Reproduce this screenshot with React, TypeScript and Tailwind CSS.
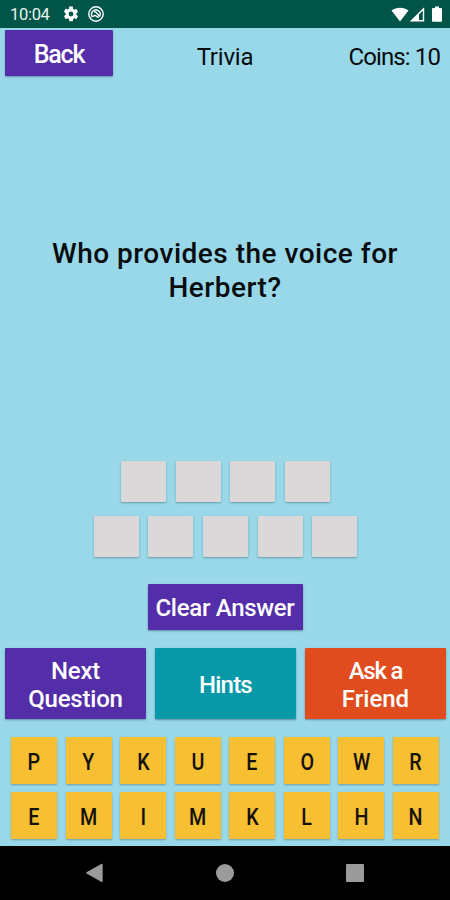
import React from 'react';

interface TileProps {
  letter: string;
}

const LetterTile: React.FC<TileProps> = ({ letter }) => {
  return (
    <button className="flex h-[47px] w-[46px] items-center justify-center rounded-[1px] bg-[#f7bf32] pt-[2px] text-[24px] leading-none font-medium text-[#15110a] shadow-[0_1px_2px_rgba(60,70,60,0.4)]">
      <span className="inline-block scale-x-[0.82]">{letter}</span>
    </button>
  );
};

const AnswerSlot: React.FC = () => {
  return <div className="h-[41px] w-[45px] rounded-[1px] bg-[#dad8d9] shadow-[0_1px_2px_rgba(40,80,90,0.45)]" />;
};

const StatusBar: React.FC = () => {
  return (
    <header className="flex h-7 shrink-0 items-center bg-[#005548] pr-[8px] pl-[10px] text-white">
      <span className="w-[41px] pt-[2px] text-[16.5px] leading-7 tracking-[-0.3px] text-[#e8f4ef]">10:04</span>
      <svg className="ml-[11px] h-[18px] w-[18px]" viewBox="0 0 24 24" fill="currentColor">
        <path d="M19.14 12.94c.04-.3.06-.61.06-.94s-.02-.64-.07-.94l2.03-1.58a.49.49 0 0 0 .12-.61l-1.92-3.32a.49.49 0 0 0-.59-.22l-2.39.96a7 7 0 0 0-1.62-.94l-.36-2.54A.48.48 0 0 0 13.92 2h-3.84a.48.48 0 0 0-.47.41l-.36 2.54a7.3 7.3 0 0 0-1.62.94l-2.39-.96a.48.48 0 0 0-.59.22L2.74 8.87a.48.48 0 0 0 .12.61l2.03 1.58a7.5 7.5 0 0 0 0 1.88l-2.03 1.58a.49.49 0 0 0-.12.61l1.92 3.32c.12.22.37.29.59.22l2.39-.96c.5.38 1.03.7 1.62.94l.36 2.54c.05.24.24.41.48.41h3.84c.24 0 .44-.17.47-.41l.36-2.54a7.3 7.3 0 0 0 1.62-.94l2.39.96c.22.08.47 0 .59-.22l1.92-3.32a.48.48 0 0 0-.12-.61zM12 15.2a3.2 3.2 0 1 1 0-6.4 3.2 3.2 0 0 1 0 6.4z" />
      </svg>
      <svg className="ml-[8px] h-4 w-4" viewBox="0 0 16 16" fill="none" stroke="currentColor">
        <circle cx="8" cy="8" r="7.2" strokeWidth="1.4" />
        <path d="M4.6 11A4.3 4.3 0 1 1 11.8 10M6 5.8q1.8-.4 2.8 1.4l3 3.6M5.2 10.6q1.4-2 2.8-.6t2.6 1.2" strokeWidth="1.4" />
      </svg>
      <svg className="ml-auto h-[15px] w-[18px]" viewBox="0 0 18 15" fill="currentColor">
        <path d="M0.5 3.5C5.5-.2 12.5-.2 17.5 3.5L9 14.5z" />
      </svg>
      <svg className="ml-[1px] h-[15px] w-[15px]" viewBox="0 0 15 15" fill="none" stroke="currentColor">
        <path d="M1.5 13.8L13.5 2V13.8z" strokeWidth="1.4" />
        <path d="M1.5 14L9 6.5V14z" fill="currentColor" stroke="none" />
      </svg>
      <svg className="ml-[7px] h-4 w-[10px]" viewBox="0 0 10 16" fill="currentColor">
        <path d="M3 0.5h4V2h2q1 0 1 1v12q0 .8-1 .8H1q-1 0-1-.8V3q0-1 1-1h2z" />
      </svg>
    </header>
  );
};

const NavBar: React.FC = () => {
  return (
    <nav className="flex h-[54px] shrink-0 items-center bg-black pl-[85px] text-[#9b9b9b]">
      <svg className="h-5 w-[19px]" viewBox="0 0 19 20" fill="currentColor">
        <path d="M1.5 9.2L16.6 .8q1.1-.5 1.1.6v17q0 1.1-1.1.6L1.5 10.6q-1-.7 0-1.4z" />
      </svg>
      <div className="ml-[112px] h-[18px] w-[18px] rounded-full bg-[#9b9b9b]" />
      <div className="ml-[112px] h-[18px] w-[18px] rounded-[1px] bg-[#9b9b9b]" />
    </nav>
  );
};

const App: React.FC = () => {
  const topRow = ['P', 'Y', 'K', 'U', 'E', 'O', 'W', 'R'];
  const bottomRow = ['E', 'M', 'I', 'M', 'K', 'L', 'H', 'N'];

  return (
    <div className="flex h-[900px] w-[450px] flex-col overflow-hidden bg-[#99d8e8] font-['Roboto','Noto_Sans',sans-serif] text-[#080c0f]">
      <StatusBar />

      <div className="grid h-[50px] shrink-0 grid-cols-[1fr_auto_1fr] pr-[10px] pl-[10px] text-[24px]">
        <button className="mt-[2px] ml-[-5px] h-[46px] w-[108px] rounded-[1px] bg-[#542ea8] text-[25px] leading-[49px] font-medium tracking-[-1.2px] text-white shadow-[0_1px_2px_rgba(30,40,90,0.4)]">
          Back
        </button>
        <span className="leading-[58px] tracking-[-0.2px]">Trivia</span>
        <span className="text-right leading-[58px] tracking-[-0.9px]">Coins: 10</span>
      </div>

      <main className="flex h-[383px] shrink-0 flex-col items-center justify-center pt-[2px] text-center text-[28px] leading-[34px] font-medium tracking-[0.5px]">
        <p className="w-[400px]">Who provides the voice for Herbert?</p>
      </main>

      <div className="flex shrink-0 flex-col items-center gap-[14px] pl-px">
        <div className="flex gap-[9.6px]">
          {[0, 1, 2, 3].map((i) => <AnswerSlot key={i} />)}
        </div>
        <div className="flex gap-[9.6px]">
          {[0, 1, 2, 3, 4].map((i) => <AnswerSlot key={i} />)}
        </div>
      </div>

      <button className="mt-[27px] h-[46px] w-[155px] shrink-0 self-center rounded-[1px] bg-[#542ea8] text-[24px] leading-[49px] font-medium tracking-[-0.3px] whitespace-nowrap text-white shadow-[0_1px_2px_rgba(30,40,90,0.45)]">
        Clear Answer
      </button>

      <div className="mt-[18px] flex h-[71px] shrink-0 gap-[9px] pr-[4px] pl-[5px] text-[24px] leading-[28px] font-medium text-white">
        <button className="flex-1 rounded-[1px] bg-[#542ea8] pt-[2px] tracking-[-0.2px] shadow-[0_1px_2px_rgba(30,40,90,0.45)]">
          Next<br />Question
        </button>
        <button className="flex-1 rounded-[1px] bg-[#0799a8] pt-[2px] tracking-[-0.8px] shadow-[0_1px_2px_rgba(30,40,90,0.45)]">
          Hints
        </button>
        <button className="flex-1 rounded-[1px] bg-[#e04c1d] pt-[2px] shadow-[0_1px_2px_rgba(30,40,90,0.45)]">
          <span className="tracking-[-1.2px]">Ask a</span><br />Friend
        </button>
      </div>

      <div className="mt-[18px] flex shrink-0 flex-col gap-2 pr-[11px] pl-[11px]">
        <div className="flex justify-between">
          {topRow.map((letter, i) => <LetterTile key={i} letter={letter} />)}
        </div>
        <div className="flex justify-between">
          {bottomRow.map((letter, i) => <LetterTile key={i} letter={letter} />)}
        </div>
      </div>

      <div className="grow" />
      <NavBar />
    </div>
  );
};

export default App;
